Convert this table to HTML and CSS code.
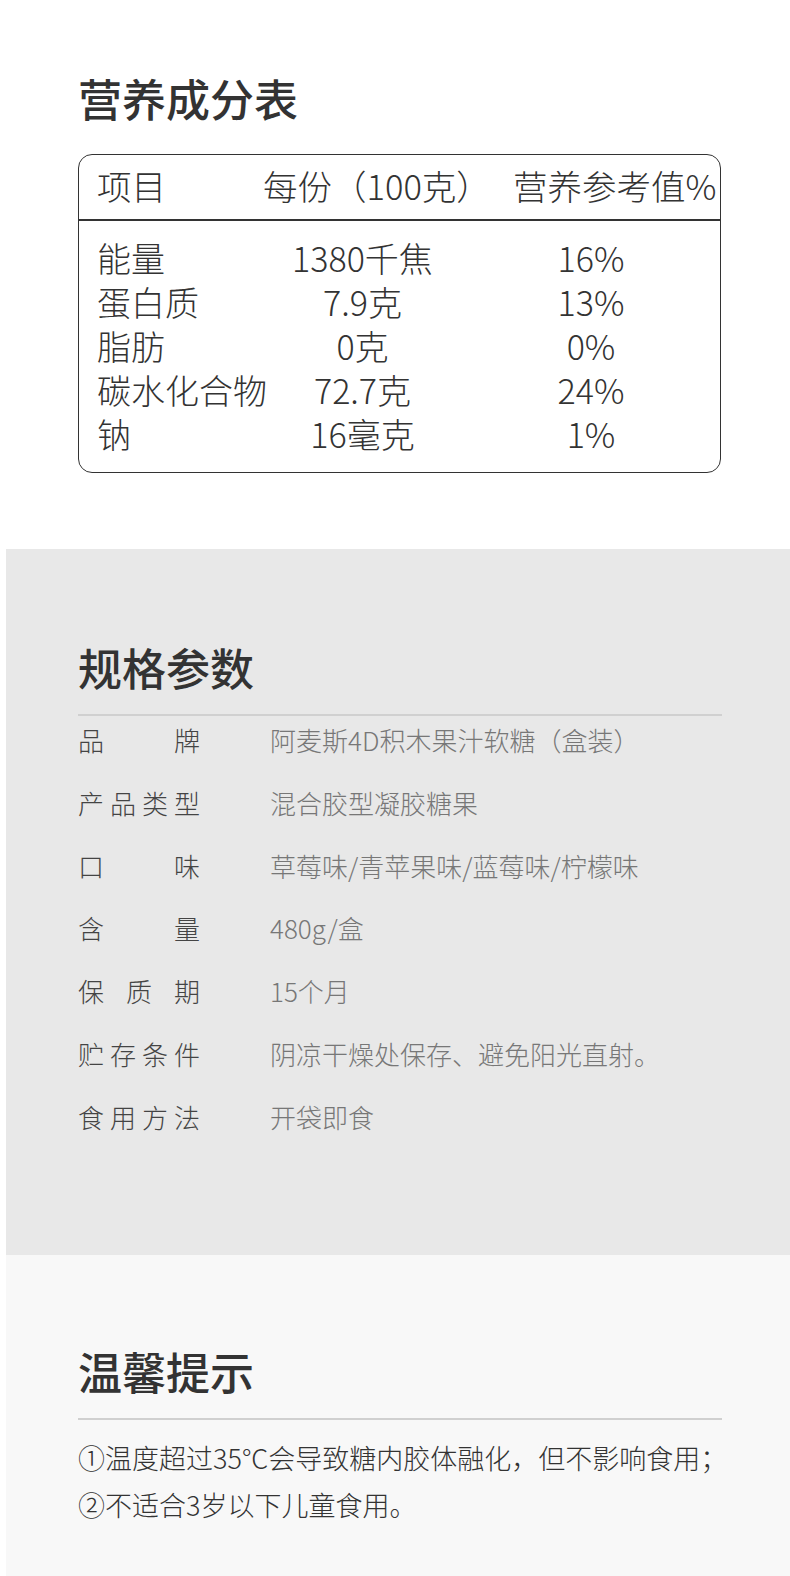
FILE: index.html
```html
<!DOCTYPE html>
<html lang="zh-CN">
<head>
    <meta charset="UTF-8">
    <meta name="viewport" content="width=device-width, initial-scale=1.0">
    <title>营养成分表</title>
    <link rel="stylesheet" href="styles.css">
</head>
<body>

    <!-- 营养成分表 -->
    <section class="nutrition">
        <h2 class="title">营养成分表</h2>
        <div class="facts">
            <div class="facts-head">
                <span>项目</span>
                <span>每份（100克）</span>
                <span>营养参考值%</span>
            </div>
            <div class="facts-body">
                <span>能量</span><span>1380千焦</span><span>16%</span>
                <span>蛋白质</span><span>7.9克</span><span>13%</span>
                <span>脂肪</span><span>0克</span><span>0%</span>
                <span>碳水化合物</span><span>72.7克</span><span>24%</span>
                <span>钠</span><span>16毫克</span><span>1%</span>
            </div>
        </div>
    </section>

    <!-- 规格参数 -->
    <section class="specs">
        <h2 class="title">规格参数</h2>
        <hr class="rule">
        <ul class="spec-list">
            <li><span class="label">品牌</span><span class="value">阿麦斯4D积木果汁软糖（盒装）</span></li>
            <li><span class="label">产品类型</span><span class="value">混合胶型凝胶糖果</span></li>
            <li><span class="label">口味</span><span class="value">草莓味/青苹果味/蓝莓味/柠檬味</span></li>
            <li><span class="label">含量</span><span class="value">480g/盒</span></li>
            <li><span class="label">保质期</span><span class="value">15个月</span></li>
            <li><span class="label">贮存条件</span><span class="value">阴凉干燥处保存、避免阳光直射。</span></li>
            <li><span class="label">食用方法</span><span class="value">开袋即食</span></li>
        </ul>
    </section>

    <!-- 温馨提示 -->
    <section class="tips">
        <h2 class="title">温馨提示</h2>
        <hr class="rule">
        <p class="tip-text">①温度超过35°C会导致糖内胶体融化，但不影响食用；<br>②不适合3岁以下儿童食用。</p>
    </section>

</body>
</html>
```

FILE: styles.css
```css
* {
    margin: 0;
    padding: 0;
    box-sizing: border-box;
}

body {
    background-color: #fff;
    font-family: "Noto Sans CJK SC", "Noto Sans", sans-serif;
    color: #333;
    width: 790px;
}

.title {
    font-size: 44px;
    line-height: 44px;
    font-weight: 500;
    color: #333;
}

.rule {
    border: none;
    height: 2px;
    background: #d0d0d0;
    margin-top: 25px;
    width: 644px;
}

/* Nutrition table */
.nutrition {
    padding: 76px 0 76px 78px;
}

.facts {
    margin-top: 34px;
    width: 643px;
    border: 1.5px solid #333;
    border-radius: 14px;
    font-size: 34px;
    font-weight: 300;
}

.facts-head {
    display: grid;
    grid-template-columns: 166px 250px 1fr;
    padding: 12px 0 16px 18px;
    line-height: 36px;
    border-bottom: 2px solid #333;
    white-space: nowrap;
    font-size: 34.5px;
}

.facts-body {
    display: grid;
    grid-template-columns: 166px 199px 1fr;
    padding: 15px 0 16px 18px;
    line-height: 44px;
    white-space: nowrap;
}

.facts-body span:nth-child(3n+2),
.facts-body span:nth-child(3n) {
    text-align: center;
}

/* Specs */
.specs {
    margin-left: 6px;
    background-color: #e8e8e8;
    padding: 96px 0 120px 72px;
}

.spec-list {
    list-style: none;
    padding-top: 6px;
    display: flex;
    flex-direction: column;
    gap: 26.8px;
}

.spec-list li {
    display: flex;
    font-size: 26px;
    line-height: 36px;
}

.label {
    width: 122px;
    text-align: justify;
    text-align-last: justify;
    color: #444;
    font-weight: 300;
    margin-right: 70px;
}

.value {
    color: #777;
    font-weight: 300;
}

/* Tips */
.tips {
    margin-left: 6px;
    background-color: #f8f8f8;
    padding: 94px 0 50px 72px;
}

.tip-text {
    padding-top: 14px;
    font-size: 27px;
    line-height: 47px;
    font-weight: 300;
    color: #333;
}
```
